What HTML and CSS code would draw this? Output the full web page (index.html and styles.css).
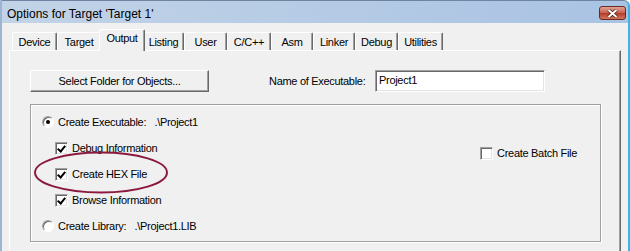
FILE: index.html
```html
<!DOCTYPE html>
<html>
  <head>
    <title>Options for Target 'Target 1'</title>
    <link rel="stylesheet" href="styles.css">
  </head>

  <body>
    <div class="window">
      <div class="titlebar">
        <span class="title">Options for Target 'Target 1'</span>
        <button class="close-btn">
          <svg width="11" height="9" viewBox="0 0 11 9">
            <path d="M1.5 1 L9.5 8 M9.5 1 L1.5 8" stroke="#4a1a14" stroke-width="3.4" />
            <path d="M1.5 1 L9.5 8 M9.5 1 L1.5 8" stroke="#fff" stroke-width="2" />
          </svg>
        </button>
      </div>

      <div class="client">
        <div class="tabs">
          <div class="tab">Device</div>
          <div class="tab">Target</div>
          <div class="tab active">Output</div>
          <div class="tab">Listing</div>
          <div class="tab">User</div>
          <div class="tab">C/C++</div>
          <div class="tab">Asm</div>
          <div class="tab">Linker</div>
          <div class="tab">Debug</div>
          <div class="tab">Utilities</div>
        </div>

        <div class="tabpage">
          <div class="top-row">
            <button class="btn">Select Folder for Objects...</button>
            <span class="name-label">Name of Executable:</span>
            <div class="textbox">Project1</div>
          </div>

          <div class="group">
            <div class="group-left">
              <div class="opt"><span class="radio checked"></span>Create Executable:   .\Project1</div>
              <div class="opt sub"><span class="check checked"></span>Debug Information</div>
              <div class="opt sub"><span class="check checked"></span>Create HEX File</div>
              <div class="opt sub"><span class="check checked"></span>Browse Information</div>
              <div class="opt"><span class="radio"></span>Create Library:   .\Project1.LIB</div>
            </div>
            <div class="group-right">
              <div class="opt"><span class="check"></span>Create Batch File</div>
            </div>
          </div>
        </div>
      </div>

      <!-- red marker drawn over the screenshot -->
      <svg class="marker" width="630" height="251">
        <ellipse cx="101" cy="172.5" rx="66" ry="20" fill="none" stroke="#8b1a3d" stroke-width="2" />
      </svg>
    </div>
  </body>
</html>
```

FILE: styles.css
```css
body {
  margin: 0;
  font-family: "Liberation Sans", Arial, sans-serif;
  font-size: 11px;
  letter-spacing: -0.3px;
  color: #000;
  background: #fff;
}

.window {
  width: 630px;
  height: 251px;
  box-sizing: border-box;
  overflow: hidden;
  position: relative;
  background: linear-gradient(to right, #c2d3e7, #a9c3e3);
  border-top: 1px solid #6f84a0;
  border-left: 2px solid #9db4d3;
  border-right: 2px solid #3cb4e8;
  border-top-right-radius: 6px;
}

.titlebar {
  height: 22px;
  display: flex;
  justify-content: space-between;
  align-items: center;
  padding: 0 2px 0 5px;
}

.title {
  font-size: 12px;
  letter-spacing: 0;
  margin-top: 3px;
}

.close-btn {
  width: 27px;
  height: 14px;
  margin-top: 2px;
  padding: 0;
  border: 1px solid #6b2a24;
  border-radius: 3px;
  background: linear-gradient(to bottom, #e0a597, #c85e4c 50%, #b33a26 51%, #d2765e);
  display: flex;
  justify-content: center;
  align-items: center;
}

.client {
  background: #f0f0f0;
  height: 100%;
  padding: 6px 7px 0 7px;
}

.tabs {
  display: flex;
  align-items: flex-end;
  height: 21px;
  margin-left: 3px;
  position: relative;
  z-index: 1;
}

.tab {
  height: 18px;
  box-sizing: border-box;
  padding-top: 2px;
  text-align: center;
  line-height: 14px;
  background: #f0f0f0;
  border-top: 1px solid #fff;
  border-left: 1px solid #fff;
  border-right: 1px solid #696969;
  box-shadow: inset -1px 0 0 #a0a0a0;
  border-radius: 2px 2px 0 0;
}

.tab:nth-child(1) { width: 45px; }
.tab:nth-child(2) { width: 44px; }
.tab:nth-child(3) { width: 46px; }
.tab:nth-child(4) { width: 41px; }
.tab:nth-child(5) { width: 43px; }
.tab:nth-child(6) { width: 44px; }
.tab:nth-child(7) { width: 42px; }
.tab:nth-child(8) { width: 42px; }
.tab:nth-child(9) { width: 43px; }
.tab:nth-child(10) { width: 45px; }

.tab.active {
  height: 22px;
  margin: 0 -2px -1px;
  padding-top: 1px;
  position: relative;
  z-index: 2;
}

.tabpage {
  height: 300px;
  padding: 19px 20px;
  border-top: 1px solid #fff;
  border-left: 1px solid #fff;
  border-right: 1px solid #696969;
  box-shadow: inset -1px 0 0 #a0a0a0;
}

.top-row {
  display: flex;
  align-items: center;
}

.btn {
  width: 179px;
  height: 22px;
  padding: 0;
  font-family: inherit;
  font-size: 11px;
  letter-spacing: -0.3px;
  background: #f0f0f0;
  border: 1px solid;
  border-color: #fff #696969 #696969 #fff;
  box-shadow: inset -1px -1px 0 #a0a0a0;
}

.name-label {
  width: 99px;
  margin-left: 60px;
}

.textbox {
  width: 170px;
  height: 22px;
  box-sizing: border-box;
  margin-left: 7px;
  padding: 2px 3px;
  line-height: 14px;
  background: #fff;
  border: 1px solid;
  border-color: #a0a0a0 #fff #fff #a0a0a0;
  box-shadow: inset 1px 1px 0 #696969, inset -1px -1px 0 #e3e3e3;
}

.group {
  width: 571px;
  height: 138px;
  box-sizing: border-box;
  margin-top: 12px;
  padding: 10px 0 0 11px;
  display: flex;
  justify-content: space-between;
  border: 1px solid #a0a0a0;
  box-shadow: 1px 1px 0 #fff, inset 1px 1px 0 #fff;
}

.group-left {
  display: flex;
  flex-direction: column;
  gap: 12px;
}

.group-right {
  padding: 31px 23px 0 0;
}

.opt {
  height: 14px;
  display: flex;
  align-items: center;
  white-space: pre;
}

.opt.sub {
  margin-left: 13px;
}

.radio {
  width: 12px;
  height: 12px;
  box-sizing: border-box;
  margin-right: 4px;
  border-radius: 50%;
  background: #fff;
  border: 1px solid;
  border-color: #a0a0a0 #fff #fff #a0a0a0;
  box-shadow: inset 1px 1px 0 #696969;
  position: relative;
}

.radio.checked::after {
  content: "";
  position: absolute;
  left: 3px;
  top: 3px;
  width: 4px;
  height: 4px;
  border-radius: 50%;
  background: #000;
}

.check {
  width: 13px;
  height: 13px;
  box-sizing: border-box;
  margin-right: 4px;
  background: #fff;
  border: 1px solid;
  border-color: #a0a0a0 #fff #fff #a0a0a0;
  box-shadow: inset 1px 1px 0 #696969, inset -1px -1px 0 #e3e3e3;
  position: relative;
}

.check.checked::after {
  content: "";
  position: absolute;
  left: 3px;
  top: 1px;
  width: 3px;
  height: 6px;
  border: solid #000;
  border-width: 0 2px 2px 0;
  transform: rotate(40deg);
}

.marker {
  position: absolute;
  left: -2px;
  top: -1px;
  pointer-events: none;
}
```
